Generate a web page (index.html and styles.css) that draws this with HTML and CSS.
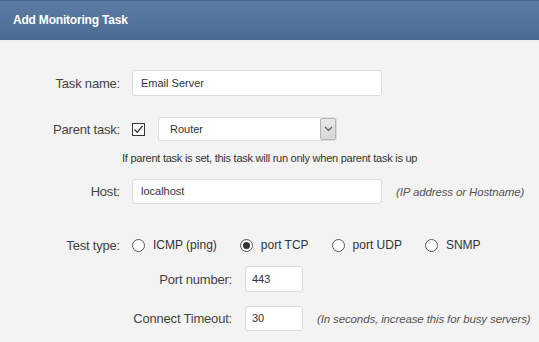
FILE: index.html
```html
<!DOCTYPE html>
<html lang="en">
<head>
  <meta charset="UTF-8" />
  <title>Add Monitoring Task</title>
  <link rel="stylesheet" href="styles.css">
</head>
<body>

  <div class="dialog-header">Add Monitoring Task</div>

  <div class="task-form">
    <div class="row row-name">
      <label class="label">Task name:</label>
      <div class="field input wide">Email Server</div>
    </div>

    <div class="row row-parent">
      <label class="label">Parent task:</label>
      <span class="checkbox">
        <svg width="13" height="13" viewBox="0 0 13 13">
          <rect x="0.5" y="0.5" width="12" height="12" fill="#fff" stroke="#333"/>
          <path d="M2.5 6.5 L5.2 9.3 L10.5 3" fill="none" stroke="#333" stroke-width="1.3"/>
        </svg>
      </span>
      <div class="field select">
        <span class="select-text">Router</span>
        <span class="select-btn">
          <svg width="9" height="6" viewBox="0 0 9 6"><path d="M1 1 L4.5 4.5 L8 1" fill="none" stroke="#555" stroke-width="1.2"/></svg>
        </span>
      </div>
    </div>

    <div class="hint-line">If parent task is set, this task will run only when parent task is up</div>

    <div class="row row-host">
      <label class="label">Host:</label>
      <div class="field input wide host">localhost</div>
      <span class="note">(IP address or Hostname)</span>
    </div>

    <div class="row row-type">
      <label class="label">Test type:</label>
      <div class="radios">
        <span class="radio"><span class="dot"></span>ICMP (ping)</span>
        <span class="radio checked"><span class="dot"></span>port TCP</span>
        <span class="radio"><span class="dot"></span>port UDP</span>
        <span class="radio"><span class="dot"></span>SNMP</span>
      </div>
    </div>

    <div class="row sub row-port">
      <label class="label">Port number:</label>
      <div class="field input small">443</div>
    </div>

    <div class="row sub row-timeout">
      <label class="label">Connect Timeout:</label>
      <div class="field input small timeout">30</div>
      <span class="note">(In seconds, increase this for busy servers)</span>
    </div>
  </div>

</body>
</html>
```

FILE: styles.css
```css
body {
  margin: 0;
  background-color: #f3f3f3;
  font-family: 'Liberation Sans', Arial, sans-serif;
  color: #333;
}

.dialog-header {
  height: 41px;
  line-height: 39px;
  padding-left: 13px;
  box-sizing: border-box;
  background: linear-gradient(#5c7ca4, #4b6b93);
  border-top: 1px solid #46658c;
  border-bottom: 1px solid #e9f1f5;
  color: #fff;
  font-size: 12px;
  font-weight: bold;
  letter-spacing: -0.2px;
}

.task-form {
  padding-top: 29px;
}

.row {
  display: flex;
  align-items: center;
  white-space: nowrap;
}

.label {
  width: 120px;
  margin-right: 12px;
  text-align: right;
  font-size: 13px;
  color: #444;
  letter-spacing: -0.2px;
}

.field {
  box-sizing: border-box;
  background-color: #fff;
  border: 1px solid #dcdcdc;
  border-radius: 3px;
  font-size: 11px;
  color: #333;
}

.input {
  height: 26px;
  line-height: 24px;
  padding-left: 8px;
}

.wide {
  width: 250px;
}

.host {
  height: 25px;
  line-height: 23px;
}

.checkbox {
  width: 13px;
  height: 13px;
  margin-right: 13px;
  display: flex;
}

.select {
  width: 179px;
  height: 24px;
  display: flex;
  align-items: center;
  justify-content: space-between;
  padding-left: 11px;
}

.select-btn {
  width: 16px;
  height: 22px;
  box-sizing: border-box;
  background: linear-gradient(#e8e8e8, #d8d8d8);
  border: 1px solid #b5b5b5;
  border-radius: 2px;
  display: flex;
  align-items: center;
  justify-content: center;
}

.row-parent {
  margin-top: 21px;
}

.hint-line {
  margin-top: 10px;
  padding-left: 122px;
  font-size: 11px;
  line-height: 14px;
  letter-spacing: -0.25px;
  color: #333;
}

.row-host {
  margin-top: 14px;
}

.note {
  margin-left: 14px;
  font-size: 11.5px;
  font-style: italic;
  letter-spacing: -0.13px;
  color: #555;
}

.row-type {
  margin-top: 31px;
  height: 20px;
}

.radios {
  display: flex;
  font-size: 12px;
  color: #333;
}

.radio {
  display: flex;
  align-items: center;
  margin-right: 23px;
}

.dot {
  width: 13px;
  height: 13px;
  box-sizing: border-box;
  border: 1px solid #555;
  border-radius: 50%;
  background-color: #fff;
  margin-right: 8px;
  position: relative;
}

.radio.checked .dot::after {
  content: "";
  position: absolute;
  left: 2px;
  top: 2px;
  width: 7px;
  height: 7px;
  border-radius: 50%;
  background-color: #333;
}

.sub {
  padding-left: 132px;
}

.sub .label {
  width: 100px;
  margin-right: 13px;
}

.small {
  width: 58px;
  padding-left: 6px;
}

.row-port {
  margin-top: 11px;
}

.row-timeout {
  margin-top: 14px;
}

.timeout {
  height: 25px;
  line-height: 23px;
}
```
